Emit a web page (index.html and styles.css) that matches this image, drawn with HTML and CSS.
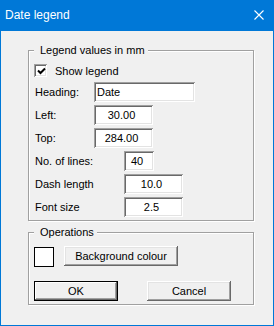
FILE: index.html
```html
<!DOCTYPE html>
<html lang="en">
<head>
    <meta charset="UTF-8">
    <meta name="viewport" content="width=device-width, initial-scale=1.0">
    <title>Date legend</title>
    <link rel="stylesheet" href="styles.css">
</head>
<body>

    <div class="window">
        <div class="titlebar">
            <span class="title">Date legend</span>
            <svg class="close" width="10" height="10" viewBox="0 0 10 10">
                <path d="M0.5 0.5 L9.5 9.5 M9.5 0.5 L0.5 9.5" stroke="#fff" stroke-width="1.1" fill="none"/>
            </svg>
        </div>

        <div class="client">
            <fieldset class="group values">
                <legend>Legend values in mm</legend>
                <label class="check-row">
                    <span class="checkbox">
                        <svg width="9" height="9" viewBox="0 0 9 9">
                            <path d="M1 3.5 L3.5 6 L8 1.5" stroke="#000" stroke-width="2" fill="none"/>
                        </svg>
                    </span>
                    Show legend
                </label>
                <div class="row first">
                    <span class="lbl">Heading:</span>
                    <input class="field heading" type="text" value="Date">
                </div>
                <div class="row">
                    <span class="lbl">Left:</span>
                    <input class="field num mid" type="text" value="30.00">
                </div>
                <div class="row">
                    <span class="lbl">Top:</span>
                    <input class="field num mid" type="text" value="284.00">
                </div>
                <div class="row">
                    <span class="lbl long">No. of lines:</span>
                    <input class="field num short" type="text" value="40">
                </div>
                <div class="row">
                    <span class="lbl long">Dash length</span>
                    <input class="field num mid" type="text" value="10.0">
                </div>
                <div class="row">
                    <span class="lbl long">Font size</span>
                    <input class="field num mid" type="text" value="2.5">
                </div>
            </fieldset>

            <fieldset class="group ops">
                <legend>Operations</legend>
                <div class="colour-row">
                    <span class="swatch"></span>
                    <button class="btn bg-btn">Background colour</button>
                </div>
                <div class="actions">
                    <button class="btn default">OK</button>
                    <button class="btn">Cancel</button>
                </div>
            </fieldset>
        </div>
    </div>

</body>
</html>
```

FILE: styles.css
```css
body {
    margin: 0;
    font-family: "Liberation Sans", Arial, sans-serif;
    font-size: 11px;
    color: #000;
}

.window {
    width: 274px;
    height: 326px;
    box-sizing: border-box;
    border: 1px solid #0078d7;
    border-top: none;
    background: #f0f0f0;
    display: flex;
    flex-direction: column;
}

.titlebar {
    height: 30px;
    margin: 0 -1px;
    background: #0078d7;
    color: #fff;
    display: flex;
    align-items: center;
    padding: 0 10px 1px 5px;
}
.title {
    font-size: 12px;
    flex: 1;
}
.close {
    margin-top: -1px;
}

.client {
    flex: 1;
}

/* etched group box */
.group {
    margin: 13px 0 0 27px;
    width: 226px;
    box-sizing: border-box;
    padding: 7px 5px 3px 5px;
    border: 1px solid #a0a0a0;
    box-shadow: 1px 1px 0 #fff, inset 1px 1px 0 #fff;
    min-inline-size: 0;
}
.group legend {
    padding: 0 3px 0 6px;
    line-height: 13px;
    background: #f0f0f0;
}
.ops {
    margin-top: 5px;
}

.check-row {
    display: flex;
    align-items: center;
    height: 13px;
    gap: 8px;
}
.checkbox {
    width: 13px;
    height: 13px;
    box-sizing: border-box;
    background: #fff;
    box-shadow: inset 1px 1px 0 #a0a0a0, inset -1px -1px 0 #fff, inset 2px 2px 0 #696969, inset -2px -2px 0 #e3e3e3;
    display: flex;
    align-items: center;
    justify-content: center;
    padding: 1px 0 0 1px;
}

.row {
    display: flex;
    align-items: center;
    height: 20px;
    margin-top: 3px;
}
.row.first {
    margin-top: 5px;
}
.lbl {
    width: 60px;
    padding-left: 1px;
    box-sizing: border-box;
}
.lbl.long {
    width: 90px;
}

.field {
    height: 20px;
    box-sizing: border-box;
    border: none;
    outline: none;
    margin: 0;
    padding: 0 2px 0 3px;
    font-family: inherit;
    font-size: 11px;
    color: #000;
    background: #fff;
    box-shadow: inset 1px 1px 0 #a0a0a0, inset -1px -1px 0 #fff, inset 2px 2px 0 #696969, inset -2px -2px 0 #e3e3e3;
}
.field.num {
    text-align: center;
    padding: 0 6px 0 2px;
}
.heading {
    width: 101px;
}
.mid {
    width: 59px;
}
.short {
    width: 30px;
}

.colour-row {
    display: flex;
    align-items: flex-start;
    gap: 10px;
}
.swatch {
    width: 20px;
    height: 20px;
    box-sizing: border-box;
    margin-top: 1px;
    border: 1px solid #000;
    background: #fff;
}

.btn {
    height: 20px;
    border: none;
    margin: 0;
    padding: 0;
    font-family: inherit;
    font-size: 11px;
    color: #000;
    background: #f0f0f0;
    box-shadow: inset -1px -1px 0 #696969, inset 1px 1px 0 #fff, inset -2px -2px 0 #a0a0a0, inset 2px 2px 0 #e3e3e3;
    width: 84px;
}
.bg-btn {
    width: 114px;
}
.btn.default {
    box-shadow: inset 0 0 0 1px #000, inset -2px -2px 0 #696969, inset 2px 2px 0 #fff, inset -3px -3px 0 #a0a0a0;
}

.actions {
    display: flex;
    gap: 29px;
    margin-top: 14px;
}
```
